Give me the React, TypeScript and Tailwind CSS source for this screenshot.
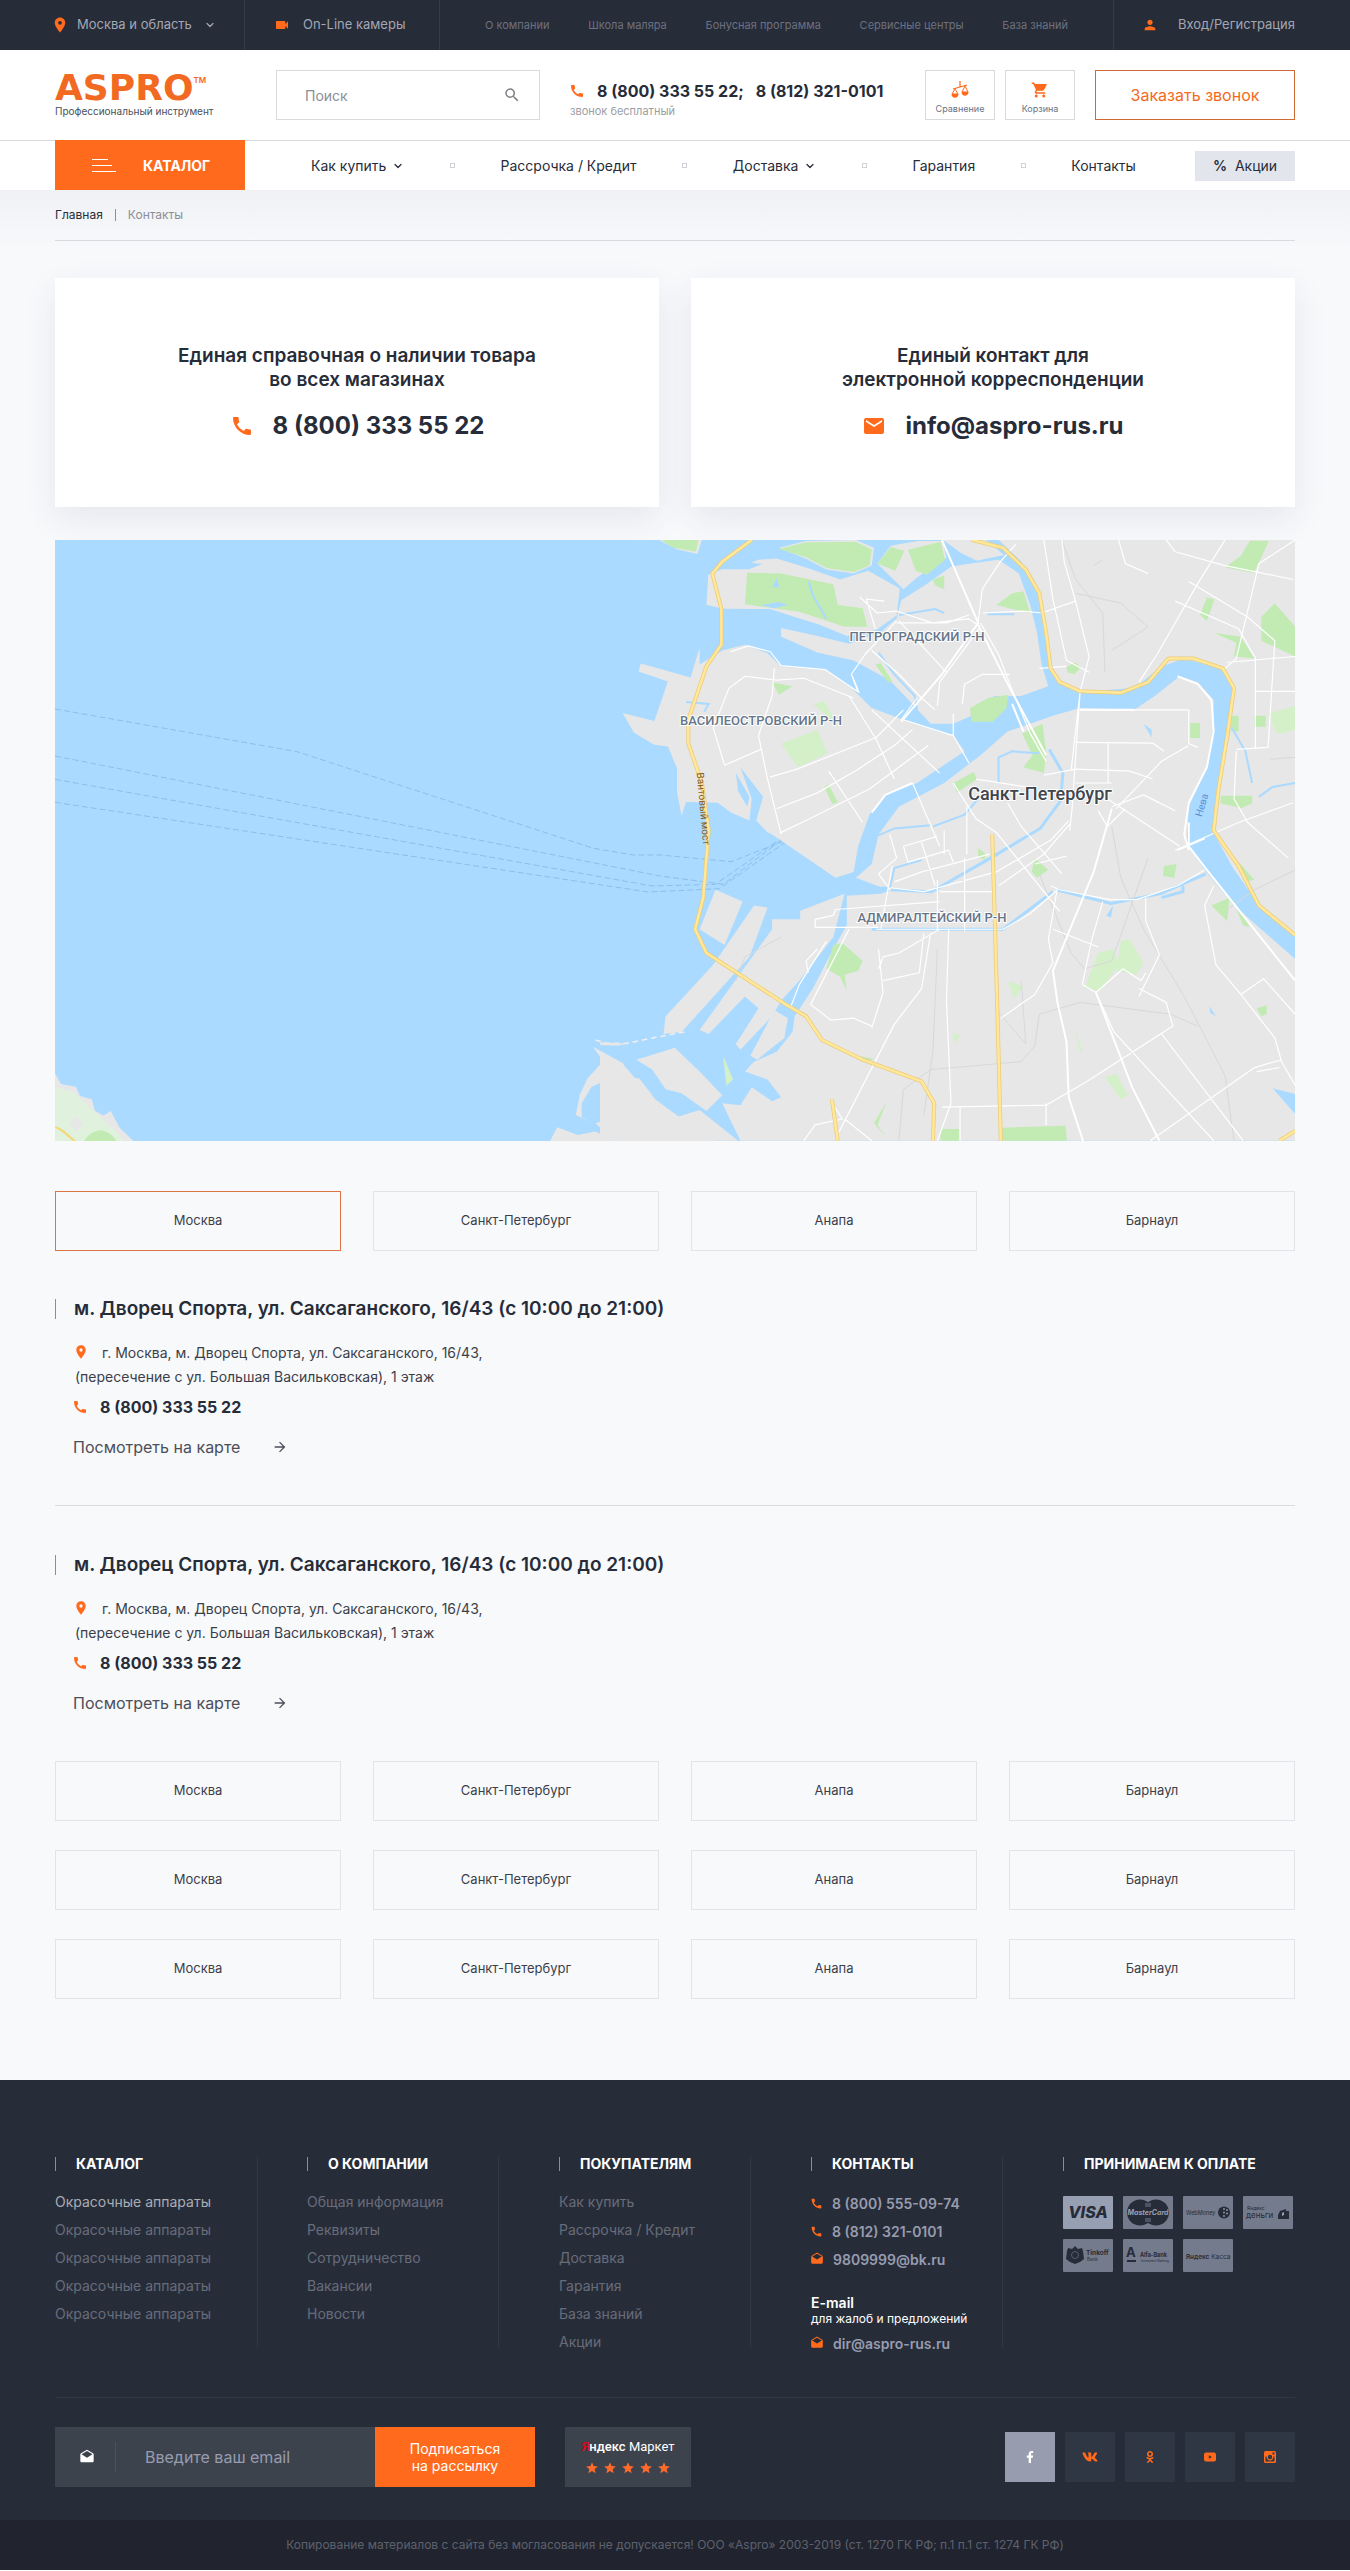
import { FormEvent, ReactNode, useState } from 'react';
import { FaFacebookF, FaOdnoklassniki, FaVk } from 'react-icons/fa';
import {
  MdArrowForward,
  MdCall,
  MdDrafts,
  MdEmail,
  MdLocationOn,
  MdPerson,
  MdSearch,
  MdShoppingCart,
  MdStar,
  MdVideocam,
} from 'react-icons/md';
import { ChevronDown } from 'lucide-react';

const cities = ['Москва', 'Санкт-Петербург', 'Анапа', 'Барнаул'];

const topLinks = [
  'О компании',
  'Школа маляра',
  'Бонусная программа',
  'Сервисные центры',
  'База знаний',
];

const navItems = [
  { label: 'Как купить', menu: true },
  { label: 'Рассрочка / Кредит', menu: false },
  { label: 'Доставка', menu: true },
  { label: 'Гарантия', menu: false },
  { label: 'Контакты', menu: false },
];

const footerColumns = [
  {
    title: 'КАТАЛОГ',
    links: [
      'Окрасочные аппараты',
      'Окрасочные аппараты',
      'Окрасочные аппараты',
      'Окрасочные аппараты',
      'Окрасочные аппараты',
    ],
  },
  {
    title: 'О КОМПАНИИ',
    links: ['Общая информация', 'Реквизиты', 'Сотрудничество', 'Вакансии', 'Новости'],
  },
  {
    title: 'ПОКУПАТЕЛЯМ',
    links: ['Как купить', 'Рассрочка / Кредит', 'Доставка', 'Гарантия', 'База знаний', 'Акции'],
  },
];

function Container({ children, className = '' }: { children: ReactNode; className?: string }) {
  return <div className={`mx-auto w-full max-w-[1350px] px-[55px] ${className}`}>{children}</div>;
}

function ScalesIcon() {
  return (
    <svg viewBox="0 0 18 18" className="h-[18px] w-[18px]" fill="none" stroke="#ff6a1c">
      <path d="M9 0v6M2 8l14-4" strokeWidth="1.2" />
      <path d="M4 8l-3 5h6zM14 5l-3 6h6z" strokeWidth="1" />
      <path d="M.5 13h7c0 5-7 5-7 0zM10.5 11h7c0 5-7 5-7 0z" fill="#ff6a1c" stroke="none" />
    </svg>
  );
}

function TopBar() {
  return (
    <div className="bg-[#272c39] text-[#a3a7b3]">
      <Container className="flex h-[50px] items-stretch">
        <a href="#" className="flex w-[190px] items-center border-r border-[#363c4b] text-[13px]">
          <MdLocationOn className="-ml-1 h-[18px] w-[18px] text-[#ff6a1c]" />
          <span className="ml-2">Москва и область</span>
          <ChevronDown className="ml-3 h-3 w-3" strokeWidth={2.5} />
        </a>
        <a
          href="#"
          className="flex w-[195px] items-center border-r border-[#363c4b] pl-[29px] text-[13px]"
        >
          <MdVideocam className="h-4 w-4 text-[#ff6a1c]" />
          <span className="ml-[13px]">On-Line камеры</span>
        </a>
        <nav className="flex flex-1 items-center justify-between px-[45px] text-[11px] text-[#6c717f]">
          {topLinks.map((label) => (
            <a key={label} href="#">
              {label}
            </a>
          ))}
        </nav>
        <a
          href="#"
          className="flex w-[182px] items-center justify-between border-l border-[#363c4b] pl-[28px] text-[13px]"
        >
          <MdPerson className="h-4 w-4 text-[#ff6a1c]" />
          Вход/Регистрация
        </a>
      </Container>
    </div>
  );
}

function Header() {
  return (
    <header className="bg-white">
      <Container className="flex h-[90px] items-center">
        <a href="#" className="flex w-[221px] flex-col">
          <span className="flex h-7 items-center pt-1 text-[#f26a21]">
            <span className="font-['DejaVu_Sans'] text-[36px] leading-7 font-bold">ASPRO</span>
            <span className="self-start text-[8px] leading-2 font-semibold">TM</span>
          </span>
          <span className="mt-1 text-[10px] leading-[14px] text-[#4b4f5a]">
            Профессиональный инструмент
          </span>
        </a>
        <form
          role="search"
          onSubmit={(e) => e.preventDefault()}
          className="flex h-[50px] w-[264px] items-center border border-[#d9dade] pr-[18px] pl-[28px]"
        >
          <input
            aria-label="Поиск"
            placeholder="Поиск"
            className="w-full min-w-0 flex-1 text-[14px] text-[#272c39] outline-none placeholder:text-[#8b8e97]"
          />
          <button type="submit" aria-label="Найти">
            <MdSearch className="h-[18px] w-[18px] text-[#7d7f86]" />
          </button>
        </form>
        <div className="ml-[30px] flex-1 pt-3 whitespace-nowrap">
          <div className="flex items-center text-[16px] leading-5 font-bold text-[#272c39]">
            <MdCall className="mr-3 -ml-px h-4 w-4 text-[#ff6a1c]" />
            <a href="tel:88003335522">8 (800) 333 55 22;</a>
            <a href="tel:88123210101" className="ml-3">
              8 (812) 321-0101
            </a>
          </div>
          <p className="text-[11px] leading-5 text-[#9b9da5]">звонок бесплатный</p>
        </div>
        <div className="flex items-center text-[9px] leading-3 text-[#6c717f]">
          <a
            href="#"
            className="flex h-[50px] w-[70px] flex-col items-center justify-center gap-1 border border-[#d9dade] pt-1.5"
          >
            <ScalesIcon />
            Сравнение
          </a>
          <a
            href="#"
            className="ml-2.5 flex h-[50px] w-[70px] flex-col items-center justify-center gap-1 border border-[#d9dade] pt-1.5"
          >
            <MdShoppingCart className="h-[18px] w-[18px] text-[#ff6a1c]" />
            Корзина
          </a>
          <button
            type="button"
            className="ml-5 h-[50px] w-[200px] border border-[#cf6a35] text-[16px] text-[#f26a21]"
          >
            Заказать звонок
          </button>
        </div>
      </Container>
      <div className="border-t border-[#d9dade]">
        <Container className="flex h-[49px] items-center">
          <button
            type="button"
            className="-mt-px flex h-[50px] w-[190px] items-center bg-[#ff6a1c] pl-[37px] text-[14px] font-bold text-white"
          >
            <span className="flex w-6 flex-col gap-[5px]">
              <span className="h-px w-4 bg-white" />
              <span className="h-px w-5 bg-white" />
              <span className="h-px w-6 bg-white" />
            </span>
            <span className="ml-[27px]">КАТАЛОГ</span>
          </button>
          <nav className="mr-[59px] ml-[66px] flex flex-1 items-center justify-between text-[14px] text-[#272c39]">
            {navItems.map((item, index) => (
              <div key={item.label} className="contents">
                {index > 0 && <span className="h-[5px] w-[5px] border border-[#d0d2d8]" />}
                <a href="#" className="flex items-center gap-1.5">
                  {item.label}
                  {item.menu && <ChevronDown className="h-3 w-3" strokeWidth={2.5} />}
                </a>
              </div>
            ))}
          </nav>
          <a
            href="#"
            className="flex h-[30px] w-[100px] items-center justify-center gap-2 bg-[#e2e6ec] text-[14px] text-[#272c39]"
          >
            <span className="font-semibold">%</span>
            Акции
          </a>
        </Container>
      </div>
    </header>
  );
}

function ContactCard({
  lines,
  icon,
  value,
  href,
}: {
  lines: string[];
  icon: ReactNode;
  value: string;
  href: string;
}) {
  return (
    <section className="flex h-[229px] flex-col items-center justify-center bg-white text-[#272c39] shadow-[0_12px_32px_rgba(60,60,110,0.09)]">
      <h2 className="text-center text-[19px] leading-6 font-semibold">
        {lines[0]}
        <br />
        {lines[1]}
      </h2>
      <a href={href} className="mt-[18px] flex items-center text-[24px] leading-8 font-bold">
        <span className="mr-[19px] text-[#ff6a1c]">{icon}</span>
        {value}
      </a>
    </section>
  );
}

function Land() {
  return (
    <g fill="#e7e7e7">
      <path d="M130 25h95l-10 36-45-12zM350 75l40-3 70 25 70 28 62-22 70 45-7 68-45 37-65 15-60-28-110-40-104-1-36-10 4-75 30-15 60 0 30-13-25-3zM395 45l60-17 110-3 40 20-5 45-40 20-60-10-45-27zM612 85l30-45 60-12h55l8 42-65 50-30 30-40-45zM757 25h95l40 38-60 15-35-20z" />
      <path d="M800 88l80-13 45 35 25 80 15 70 10 80 15 55-60 25h-60l-50 50-40 20h-50l-40-50-50-60-80-50-80-20-80-40v-22l80 20 70 20 70-30 35-35 10-45 55-40 55-45z" />
      <path d="M220 340l50-35 50-15 50 22 30 33 100 10 55 45 45 50 70 30 110 40 25 40-105 80-70 30-35 50-25 80-10 65-40 15-140-110-10-5-25-30 15-60-50-75 25 80-5 55-40-20-30-25-70-2-10 35-10-60v-60l-20-55-30-5-45-30-25-50 70 20 30-100-65-25 5-20 110 35 20-75z" />
      <path d="M880 25h655v1000l-80-75-60-100-40-85 10-115 25-130 10-120-30-50-80-25-50 20-60 55-120 10-50-25-20-75-15-130-45-100z" />
      <path d="M565 880l35-35 15-75 45-70 100-60 80-70 60-60 100-40 60-20 120 5 45-35 55-50 40 15 35 45v70l-15 100-40 100-5 90 40 70 65 90 135 135v460H310l-40-95 40 5 25-45 45 35 20-10-30-45-50-20 20-25 50-25 35-50 5-40 40-70 45-100 30-60v-75l75-5 20-8z" />
      <path d="M255 910l60 30-40 110-55-40zM340 950l30 5-40 125-150 190-40 5 5-45 105-130zM380 985h62v-22l98-43-25 110-75 110-40 50-20 40-70 85-10-15 50-90-30-30-80 95-20-10 160-255zM385 1215l30 20-8 50-60 55-15-10z" />
      <path d="M80 1340l85-30 55 60 50 60-35 40-55-45-35-10-30-50zM0 1320l50 30 60 80 65 55 65 60H0zM170 1485l50-18 85 78h-60zM0 1296l60 3-20 6-40-2z" />
    </g>
  );
}

function Parks() {
  return (
    <g fill="#c2ebb3">
      <path d="M135 25h82l-5 30-50-10zM325 108l75 2 115 27 10 53 55 8 10 47h-50l-100-38-120-19zM395 48l60-17 110-1 35 20-5 40-35 16-60-10-45-27zM612 85l30-42 30 10-20 50zM680 50l72-20 10 45-40 38-25-10zM875 190l35-30 25-5 15 55-40-10zM820 485l-3-35 40-25 45-8-5 35-30 33zM932 515l45-25 8 70-5 55-45-15 20-30z" />
      <path d="M380 385l45 10-30 22zM608 340l12-3 25 45-8 5zM735 125l25-10v35l-20-10zM495 650l10-6 20 45-12 4zM780 640l45-28 8 18-45 35zM1030 345l20-10 12 12-15 18-15-5zM1380 95l35-30 20-38h42l-33 82zM1325 215l15-45 17 5-17 55zM1460 220l30-35 45 60v75l-75-40zM1400 320l5-35-50-25 60 10 30 55zM1395 470h15v40h-18zM1445 470h25v28h-25zM1303 488h22v38h-22zM1370 672h70v20l-25 12-45-13zM1410 840l35 45-20 5zM1350 950l40-20-5 60zM960 830l30 30-25 20-12-15zM1245 850l28-5-5 35-25-5zM835 805l15 12v18l-15-8zM515 1050l20-5 45 45-10 25-30 10 5 40-15-35-30-20zM1450 1210l22-8v22l-12 7zM570 1330l35 8-15 5zM752 1515h42v30h-42zM888 1512l140-5 3 38H888zM605 1500l28-55-20 60 18 30zM1395 930l40 75-15-5z" />
      <path
        d="M400 540l80-35 22 60-65 35zM470 440l25-7 30 60zM1475 465l60-20v60l-40 12zM1070 1160l30-90 35-10 10 40-40 65zM1150 1040l20-5 30 60-15 30-45-10zM902 1140l32 15-20 32zM1115 1385l25-10 25 55-15 10zM272 1330l22 60-15 15zM780 1270l15 10-12 18zM1050 1265l15 55-8-5z"
        fill="#d3f0c8"
      />
    </g>
  );
}

function Water() {
  return (
    <g fill="#aadaff">
      <path d="M355 190l40-8 20 8-30 8zM380 145l10-22 6 22zM300 615l30 60-5 25-20-40zM1485 1412l50 15v50zM1200 490l18 15v20zM1345 1205l15 25-12-8zM1118 975l15-25-5 30z" />
      <g fill="none" stroke="#aadaff">
        <path
          d="M992 555l30 60-5 70-45 70-110 75-130 85-90-5M640 905l-95 5M600 1010h290l110-95M1008 910l120 35 110-25 100-50M1240 930l47-15v-15"
          strokeWidth="3"
          vectorEffect="non-scaling-stroke"
        />
        <path
          d="M615 310l35 55 45 55 5 35M880 640v-65l30-15 60 5M640 905l10-50 60-20M735 750l70-30 30-40M610 775l40-20 80-8M1535 640l-50 10-30 25M1395 500l30 60 15 80M660 215l80-15 20 10M460 130l10 35 30 60M855 213h60M190 435l50 5-10 20"
          strokeWidth="2"
          vectorEffect="non-scaling-stroke"
        />
      </g>
    </g>
  );
}

// Ring road over the bay, the Neva embankment and the avenue going south
const highways =
  'M335 25l-65 55-22 30 20 90v90l-33 55-40 135v60l30 100 15 120-12 170-18 80 25 60 175 130 45 30 35 60 90 50 130 55 28 55-3 95M820 25l70 20 50 55 30 60 15 100 10 90 20 35 45 23 90 4 60-27 45-60h55l65 25 25 50-15 120-20 140-10 100 55 90 45 100 80 75M866 770l6 230 6 240 7 305M512 1440l13 105M1535 1520l-35 25';

function Roads() {
  return (
    <g fill="none" strokeLinejoin="round">
      <path
        d="M970 870l70 200 30 40 60-20 80-260M1020 25l30 100 60 85 5 150M1050 160l100 25 60 60-80 60M1130 750l20 130 50 130 90 170 90 200 20 165M660 1545l10-130 60-50 200-20 30-40 10-80 90-30 200 30 60 30M745 1060l-10 260-20 160M1090 90l20-15M1535 860l-90 50-60 50M1480 580l55-5M300 1140l20-60 80-50M880 1220l60 80-10-160"
        stroke="#d8d8da"
        strokeWidth="1"
        vectorEffect="non-scaling-stroke"
      />
      <g stroke="#ffffff">
        <path
          d="M288 308l40-15 48 15 24 35 97 10 75 58-15-42M574 170l38 40 42-5 80 30 80-10 20 15 10-90 40-70 35-45M608 250l-20-75 40 5M655 235l110 0 50-20M385 350l-5 70-30 100 20 110 30 140M375 625l60-20 175-80 60-70M285 400l35-30 70 10 60-5 110 50M285 400l-35 100 25 95 80-40M390 705l90-40 90-60 80-60 40-40M400 765l55-30 140-80 130-110M550 420l60 110 40 100M505 610l75 130M600 455l150 160M570 410l-15-45 30-50 70-85M600 305l60 60 50 60 30 30M660 230l105 130M700 425l-35 55M745 445l5-60 90-140M800 440l5-50 40-25 60 0M840 235l40 80 30 90 40 110 35 70M845 210l90-5 40 5 75-30M980 25l20 150 30 155 50 30M1020 25l5 55 25 100 30 140-20 90-20 200M970 350l60-5M1250 25l20 30 110 35 150 35M1145 25l15 60 50 25M1380 25l-60 110-90 180-40 70M1535 25l-80 60-50 240-30 30M1300 130l130 90 60 60-15 270-70 5M1270 180l140 70 35 70M1447 320v230M1447 408h88M1385 335l150-15M1060 455h240v85l20 10M1050 537l170 2 25 20M1122 540v100M1050 605l120 5 50 20M1300 545l-60 40-100 120M980 620l70-15M1050 640h80M1060 410l-18 300-5 50M780 465v55l35 70M670 480l110 40M690 640l60 160M780 640l50 90 45 35 140 200M830 630l110 20M900 690l30 60 90 120M640 770l15 60-40 40 25 40M670 800l75-25M670 800l10 40 90-30 10 30M710 790l30 110M760 760v60M640 905l75 10 160-50 120-80 40-50M650 890l60-25 150-45M750 915h120M810 700v120M520 960l230-20M520 960l-5 15-40 10v20h140M610 1010h280l60-40 60-60M620 1010l25-160M745 885v125M805 830v185M880 900l100-80 60-80M960 845l70-20M1000 1010l100 45M1160 705l-40 45-20-40M1130 700l70-30 70 40M1530 690l-120 50-140 70M1120 680l160 120M1405 560l-5 120 30 60 90 90M1335 860l-60 40-90 35h-60l-110-25-20-10M1010 905l-20 130 10 60-40 80-75 60M1205 930v60l30 85-45 105M1110 940l-25 100-20 110 30 20 60-60 40 30 10-20M1095 1170l40 100 220 275M1190 1160l60 35 15 60-190 140-90 60-230 5M1240 1275l180 270M985 1450v55M795 1460v85M1355 900l-20 50 25 150M1360 1100l55 75 75 110 15 60 30 60M1415 1175l50-40 70 90M1505 1340l-60 20-230 185M1450 1370l50-10M750 1010l-90 60-35 10-10 30M770 1010l-5 180 10 260-30 95M715 1020l-10 100-80 20M730 1020l-20 140-60 90-130 290M550 1010l-85 190 45 40 50-5 40 20M615 1060l10 110-25 90M510 1445l25 45-60 15-25 40M540 1490l60 55M480 1060l-25 30 5 30M500 1040l-60 110-20 60"
          strokeWidth="1.2"
          vectorEffect="non-scaling-stroke"
        />
        <path
          d="M755 25l80 210-80 130-90 120M835 240l70 160 80 170M1130 705l-40 160-90 250 10 80 20 100 5 140 60 210M1095 1170l30 90 50 150 60 135M1300 740v60l40 60 195 280M1275 370l45 20 30 40M1350 430l5 80-15 90-40 90-10 80 10 40M1060 455h120M910 440l25 70M1275 810l60-30M690 640l-60 30-30 45"
          strokeWidth="2"
          vectorEffect="non-scaling-stroke"
        />
      </g>
      <path d={highways} stroke="#eccb76" strokeWidth="4" vectorEffect="non-scaling-stroke" />
      <path d={highways} stroke="#ffe89b" strokeWidth="2.5" vectorEffect="non-scaling-stroke" />
    </g>
  );
}

function CityMap() {
  return (
    <svg
      viewBox="0 0 1240 601"
      role="img"
      aria-label="Карта Санкт-Петербурга"
      className="mt-[33px] block h-auto w-full font-[Roboto]"
    >
      <rect width="1240" height="601" fill="#aadaff" />
      <g transform="translate(-15 150) scale(0.3954 0.3333)">
        <path
          d="M38 1150l15 32 38 8 10 28 30 10 8 35 22 14 18-14 22 50 35 40H38zM1398 1070l77 50 5 42 35 3 30 45 23 40 140 103h-253l-50-53 40-15 0-35 25-35-55-35-20 10-25 50v45l30 15-45-25 10-60 20-50 40-52zM1308 1312l52 23 45-10 45 28h-160z"
          fill="#e7e7e7"
        />
        <path d="M38 1190l50 20 45 50 60 65 20 28H38z" fill="#e0f2de" />
        <path d="M112 1353c10-22 25-30 43-32 15 2 30 15 38 32z" fill="#c2ebb3" />
        <path d="M75 1300l20-20 15 25-20 20z" fill="#e7e7e7" />
        <path d="M38 1312c20 5 30 25 50 41" fill="none" stroke="#f7d674" strokeWidth="6" />
        <path
          d="M38 57l612 128 750 290 100 20h68l180 20 280-130M38 198l1530 360 160 25 210-190M38 268l1510 320 160-5 230-190M38 337l1500 269 180-10 240-200"
          fill="none"
          stroke="#8abfec"
          strokeWidth="1"
          strokeDasharray="6 3"
          vectorEffect="non-scaling-stroke"
        />
        <path
          d="M1405 1050l30 10h50l60-15 90-20"
          fill="none"
          stroke="#eeeeee"
          strokeWidth="5"
          strokeDasharray="14 10"
        />
      </g>
      <g transform="translate(545 -10) scale(0.4529 0.3953)">
        <Land />
        <Parks />
        <Water />
        <Roads />
      </g>
      <g textAnchor="middle" fontWeight="500" stroke="#ffffff" strokeWidth="2" paintOrder="stroke">
        <g fill="#66758a" fontSize="13">
          <text x="862" y="101">
            ПЕТРОГРАДСКИЙ Р-Н
          </text>
          <text x="706" y="185">
            ВАСИЛЕОСТРОВСКИЙ Р-Н
          </text>
          <text x="877" y="382">
            АДМИРАЛТЕЙСКИЙ Р-Н
          </text>
        </g>
        <text x="985" y="260" fill="#41454d" fontSize="18">
          Санкт-Петербург
        </text>
      </g>
      <text
        transform="translate(645 269) rotate(85)"
        textAnchor="middle"
        fontSize="10"
        fill="#8a5a20"
      >
        Вантовый мост
      </text>
      <text
        transform="translate(1150 266) rotate(-74)"
        textAnchor="middle"
        fontSize="10"
        fill="#5b8fd6"
      >
        Нева
      </text>
    </svg>
  );
}

function CityRow({
  selected,
  onSelect,
}: {
  selected?: string;
  onSelect: (city: string) => void;
}) {
  return (
    <div className="grid grid-cols-4 gap-8">
      {cities.map((city) => (
        <button
          key={city}
          type="button"
          onClick={() => onSelect(city)}
          className={
            city === selected
              ? 'h-[60px] border border-[#dd7444] text-[13px] text-[#3b3f4a]'
              : 'h-[60px] border border-[#e2e4e9] text-[13px] text-[#3b3f4a]'
          }
        >
          {city}
        </button>
      ))}
    </div>
  );
}

function Shop() {
  return (
    <article className="text-[#272c39]">
      <h2 className="flex h-5 items-center border-l border-[#e0733f] pl-[18px] text-[19px] leading-5 font-semibold">
        м. Дворец Спорта, ул. Саксаганского, 16/43 (с 10:00 до 21:00)
      </h2>
      <address className="mt-[22px] pl-5 text-[14px] leading-6 text-[#3b3f4a] not-italic">
        <MdLocationOn className="-ml-0.5 mr-[13px] inline-block h-4 w-4 align-[-2px] text-[#ff6a1c]" />
        г. Москва, м. Дворец Спорта, ул. Саксаганского, 16/43,
        <br />
        (пересечение с ул. Большая Васильковская), 1 этаж
      </address>
      <a
        href="tel:88003335522"
        className="mt-1.5 ml-[17px] flex items-center text-[16px] leading-6 font-bold"
      >
        <MdCall className="mr-3 h-4 w-4 text-[#ff6a1c]" />8 (800) 333 55 22
      </a>
      <a href="#" className="mt-4 ml-[18px] flex items-center text-[16px] leading-6 text-[#4b4f5a]">
        Посмотреть на карте
        <MdArrowForward className="ml-8 h-4 w-4" />
      </a>
    </article>
  );
}

function FooterTitle({ children }: { children: ReactNode }) {
  return (
    <h3 className="border-l border-[#ff6a1c] pl-5 text-[14px] leading-[14px] font-bold whitespace-nowrap text-white">
      {children}
    </h3>
  );
}

function Card({ children, active = false }: { children: ReactNode; active?: boolean }) {
  return (
    <li
      className={
        active
          ? 'h-[33px] w-[50px] rounded-[1px] bg-[#979fb3]'
          : 'h-[33px] w-[50px] rounded-[1px] bg-[#747b8c]'
      }
    >
      <svg viewBox="0 0 50 33" className="h-full w-full" fill="#272c39">
        {children}
      </svg>
    </li>
  );
}

function PaymentCards() {
  return (
    <ul className="mt-[25px] flex flex-wrap gap-2.5">
      <Card active>
        <text x="25" y="22" fontSize="16" fontWeight="800" fontStyle="italic" textAnchor="middle">
          VISA
        </text>
      </Card>
      <Card>
        <circle cx="17" cy="16.5" r="13" />
        <circle cx="33" cy="16.5" r="13" />
        <path d="M22 8h6M22 10h6M22 23h6M22 25h6" stroke="#747b8c" />
        <text
          x="25"
          y="19"
          fontSize="7"
          fontWeight="700"
          fontStyle="italic"
          textAnchor="middle"
          fill="#979fb3"
        >
          MasterCard
        </text>
      </Card>
      <Card>
        <text x="3" y="18.5" fontSize="5.5">
          WebMoney
        </text>
        <circle cx="41" cy="16.5" r="6" />
        <g fill="#979fb3">
          <circle cx="41" cy="13" r="0.9" />
          <circle cx="44" cy="14" r="0.9" />
          <circle cx="41" cy="16.5" r="0.9" />
          <circle cx="44" cy="17.5" r="0.9" />
          <circle cx="41" cy="20" r="0.9" />
        </g>
      </Card>
      <Card>
        <text x="4" y="14" fontSize="5">
          Яндекс
        </text>
        <text x="3" y="22" fontSize="8">
          деньги
        </text>
        <path d="M37 15l6-2v2h3v8H35v-4z" />
        <path d="M39 17l2-1v3l-2 1z" fill="#979fb3" />
      </Card>
      <Card>
        <path d="M12 7l3 3 4-1 1 3 1 8-4 3-5 2-5-2-4-3 1-8 1-3 4 1z" />
        <circle cx="12" cy="16" r="3.5" fill="none" stroke="#555c6c" />
        <text x="23" y="16" fontSize="6.5" fontWeight="700">
          Tinkoff
        </text>
        <text x="24" y="22" fontSize="4.5">
          Bank
        </text>
      </Card>
      <Card>
        <text x="3" y="18" fontSize="13" fontWeight="700">
          А
        </text>
        <rect x="4" y="21" width="9" height="2" />
        <text x="17" y="18" fontSize="5.5" fontWeight="700">
          Alfa-Bank
        </text>
        <text x="18" y="23" fontSize="3">
          Investment Banking
        </text>
      </Card>
      <Card>
        <text x="25" y="19.5" fontSize="6.5" textAnchor="middle">
          <tspan fontWeight="600">Яндекс</tspan> Касса
        </text>
      </Card>
    </ul>
  );
}

const contactLink = 'flex h-7 items-center text-[14px] font-semibold text-[#979caf]';

function Footer() {
  const [email, setEmail] = useState('');

  function subscribe(event: FormEvent) {
    event.preventDefault();
    setEmail('');
  }

  return (
    <footer className="bg-[#272c39]">
      <Container className="pt-[77px] pb-[33px]">
        <div className="grid grid-cols-[repeat(4,192px)_1fr] gap-x-[60px]">
          {footerColumns.map((column, index) => (
            <div
              key={column.title}
              className={
                index === 0
                  ? '-mr-[11px] h-[190px] border-r border-[#313744]'
                  : 'h-[190px] border-r border-[#313744]'
              }
            >
              <FooterTitle>{column.title}</FooterTitle>
              <ul className="mt-[17px] text-[14px] leading-7 text-[#676c7a]">
                {column.links.map((label, i) => (
                  <li key={i} className={index === 0 && i === 0 ? 'text-[#a9acb5]' : ''}>
                    <a href="#">{label}</a>
                  </li>
                ))}
              </ul>
            </div>
          ))}
          <div className="h-[190px] border-r border-[#313744]">
            <FooterTitle>КОНТАКТЫ</FooterTitle>
            <div className="mt-[18px]">
              <a href="tel:88005550974" className={contactLink}>
                <MdCall className="mr-[9px] -ml-px h-[13px] w-[13px] text-[#ff6a1c]" />8 (800)
                555-09-74
              </a>
              <a href="tel:88123210101" className={contactLink}>
                <MdCall className="mr-[9px] -ml-px h-[13px] w-[13px] text-[#ff6a1c]" />8 (812)
                321-0101
              </a>
              <a href="mailto:9809999@bk.ru" className={contactLink}>
                <MdDrafts className="mr-[9px] -ml-px h-[14px] w-[14px] text-[#ff6a1c]" />
                9809999@bk.ru
              </a>
            </div>
            <p className="mt-[22px] text-[14px] leading-4 font-semibold text-white">E-mail</p>
            <p className="text-[12px] leading-4 whitespace-nowrap text-white">
              для жалоб и предложений
            </p>
            <a href="mailto:dir@aspro-rus.ru" className={`mt-0.5 ${contactLink}`}>
              <MdDrafts className="mr-[9px] -ml-px h-[14px] w-[14px] text-[#ff6a1c]" />
              dir@aspro-rus.ru
            </a>
          </div>
          <div>
            <FooterTitle>ПРИНИМАЕМ К ОПЛАТЕ</FooterTitle>
            <PaymentCards />
          </div>
        </div>

        <div className="mt-[50px] flex items-center border-t border-[#313744] pt-[29px]">
          <form onSubmit={subscribe} className="flex h-[60px] w-[480px]">
            <div className="flex min-w-0 flex-1 items-center bg-[#3d434d]">
              <MdDrafts className="ml-6 h-4 w-4 shrink-0 text-white" />
              <span className="ml-5 h-[30px] w-px bg-[#4b515b]" />
              <input
                type="email"
                aria-label="Введите ваш email"
                placeholder="Введите ваш email"
                value={email}
                onChange={(e) => setEmail(e.target.value)}
                className="ml-[29px] min-w-0 flex-1 text-[16px] text-white outline-none placeholder:text-[#979caf]"
              />
            </div>
            <button
              type="submit"
              className="w-[160px] shrink-0 bg-[#ff6a1c] text-[14px] leading-[17px] text-white"
            >
              Подписаться
              <br />
              на рассылку
            </button>
          </form>
          <a
            href="#"
            className="ml-[30px] flex h-[60px] w-[126px] flex-col items-center justify-center gap-1.5 bg-[#3d434d] text-white"
          >
            <span className="font-[Roboto] text-[13px] leading-4">
              <span className="font-medium">
                <span className="text-[#e3001b]">Я</span>ндекс
              </span>{' '}
              Маркет
            </span>
            <span className="flex gap-1 text-[#ff6a2b]">
              {[1, 2, 3, 4, 5].map((star) => (
                <MdStar key={star} className="h-[14px] w-[14px]" />
              ))}
            </span>
          </a>
          <div className="ml-auto flex gap-2.5 text-[#ff6a1c]">
            <a
              href="#"
              aria-label="Facebook"
              className="flex h-[50px] w-[50px] items-center justify-center bg-[#979caf] text-white"
            >
              <FaFacebookF className="h-3 w-3" />
            </a>
            <a
              href="#"
              aria-label="VK"
              className="flex h-[50px] w-[50px] items-center justify-center bg-[#303744]"
            >
              <FaVk className="h-4 w-4" />
            </a>
            <a
              href="#"
              aria-label="Одноклассники"
              className="flex h-[50px] w-[50px] items-center justify-center bg-[#303744]"
            >
              <FaOdnoklassniki className="h-3 w-3" />
            </a>
            <a
              href="#"
              aria-label="YouTube"
              className="flex h-[50px] w-[50px] items-center justify-center bg-[#303744]"
            >
              <svg viewBox="0 0 12 10" className="h-[10px] w-3">
                <rect width="12" height="9" y="0.5" rx="2" fill="currentColor" />
                <path d="M4.8 3.2v3.6L8 5z" fill="#303744" />
              </svg>
            </a>
            <a
              href="#"
              aria-label="Instagram"
              className="flex h-[50px] w-[50px] items-center justify-center bg-[#303744]"
            >
              <svg viewBox="0 0 12 12" className="h-3 w-3">
                <rect width="12" height="12" rx="1.5" fill="currentColor" />
                <path d="M1.5 5.5h1.3a3.3 3.3 0 1 0 6.4 0h1.3v5h-9z" fill="#303744" />
                <circle cx="6" cy="6" r="2.2" fill="#303744" />
                <rect x="8.5" y="1.5" width="2" height="2" fill="#303744" />
              </svg>
            </a>
          </div>
        </div>
      </Container>
      <p className="bg-[#21242f] text-center text-[12px] leading-[50px] text-[#5d616d]">
        Копирование материалов с сайта без могласования не допускается! ООО «Aspro» 2003-2019 (ст.
        1270 ГК РФ; п.1 п.1 ст. 1274 ГК РФ)
      </p>
    </footer>
  );
}

export default function App() {
  const [city, setCity] = useState('Москва');

  return (
    <div className="bg-[#f8f9fb] font-[Inter,'Liberation_Sans',sans-serif]">
      <TopBar />
      <Header />
      <main className="bg-[linear-gradient(#f0f1f5,#f8f9fb_60px)]">
        <Container className="pb-[81px]">
          <nav className="flex h-[51px] items-center gap-3 border-b border-[#d9dbe1] text-[12px] text-[#8b8e97]">
            <a href="#" className="text-[#272c39]">
              Главная
            </a>
            <span className="h-3 w-px bg-[#8b8e97]" />
            <span>Контакты</span>
          </nav>
          <div className="mt-[37px] grid grid-cols-2 gap-8">
            <ContactCard
              lines={['Единая справочная о наличии товара', 'во всех магазинах']}
              icon={<MdCall className="h-6 w-6" />}
              value="8 (800) 333 55 22"
              href="tel:88003335522"
            />
            <ContactCard
              lines={['Единый контакт для', 'электронной корреспонденции']}
              icon={<MdEmail className="h-6 w-6" />}
              value="info@aspro-rus.ru"
              href="mailto:info@aspro-rus.ru"
            />
          </div>
          <CityMap />
          <div className="mt-[50px]">
            <CityRow selected={city} onSelect={setCity} />
          </div>
          <div className="mt-12 border-b border-[#d9dbe1] pb-[46px]">
            <Shop />
          </div>
          <div className="mt-[49px] mb-[46px]">
            <Shop />
          </div>
          <div className="flex flex-col gap-[29px]">
            <CityRow onSelect={setCity} />
            <CityRow onSelect={setCity} />
            <CityRow onSelect={setCity} />
          </div>
        </Container>
      </main>
      <Footer />
    </div>
  );
}
